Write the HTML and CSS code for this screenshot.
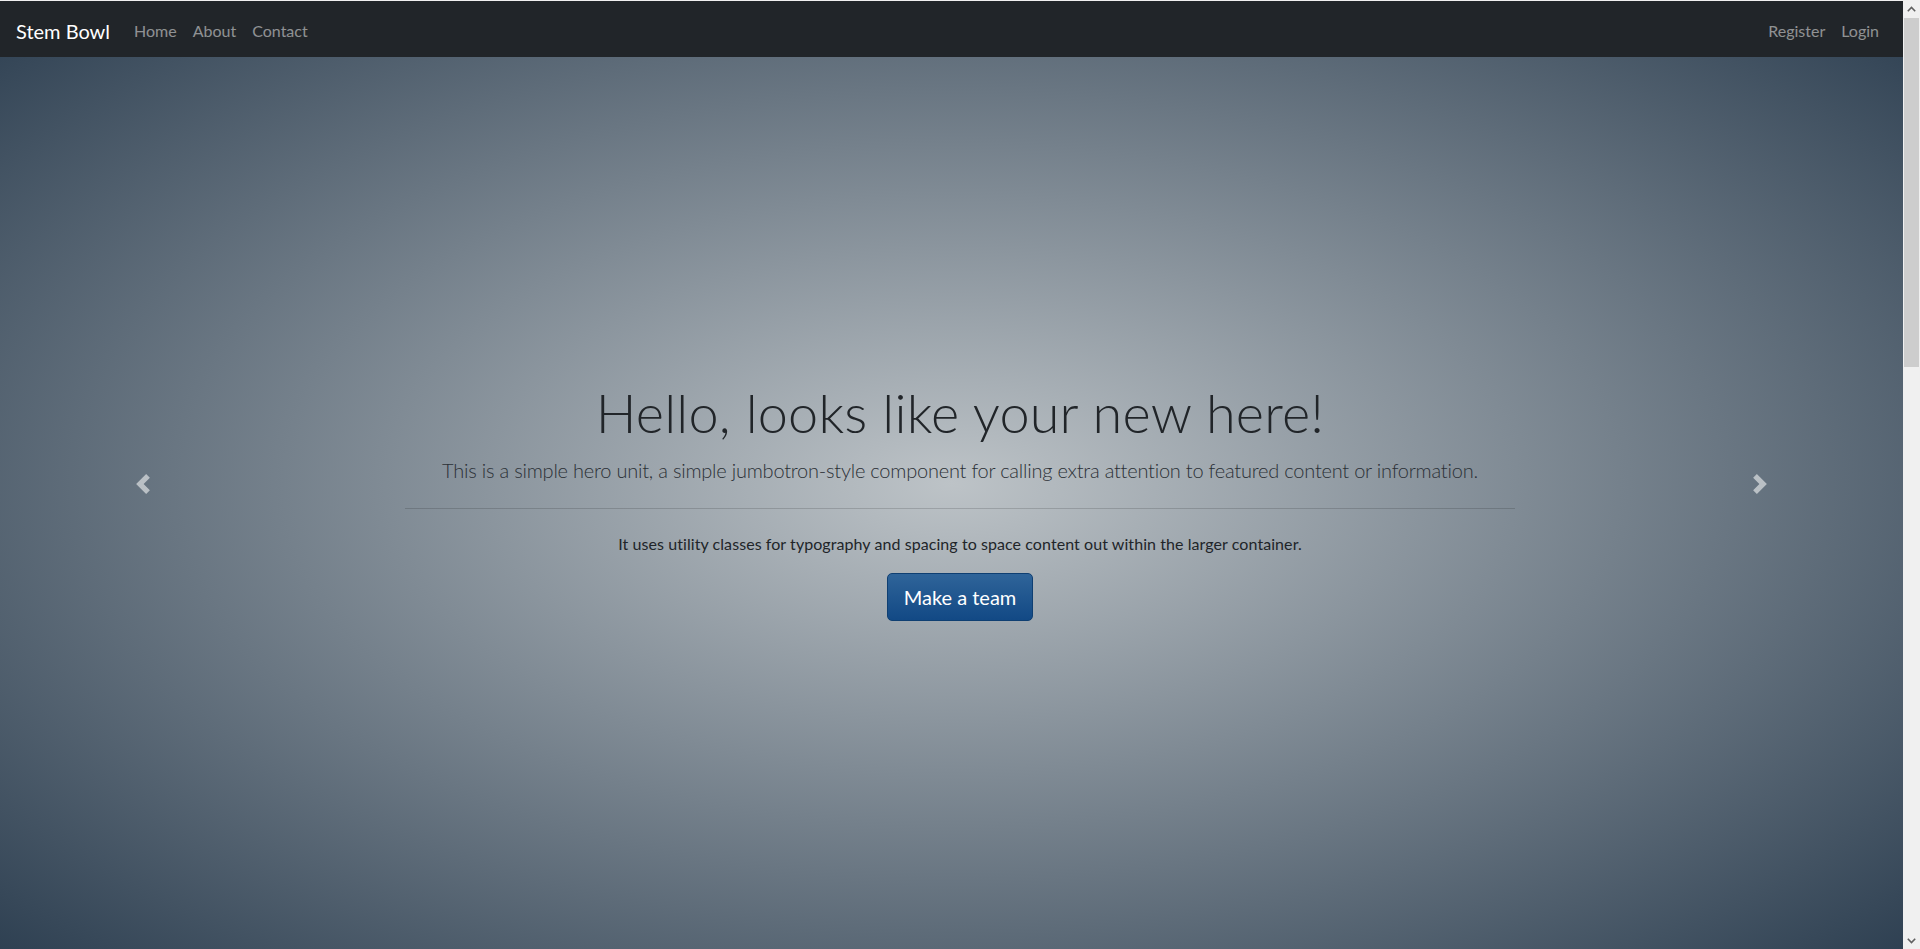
FILE: index.html
```html
<!DOCTYPE html>
<html lang="en">
<head>
<meta charset="utf-8">
<title>Stem Bowl</title>
<link rel="stylesheet" href="styles.css">
</head>
<body>
<div class="page">
  <nav class="navbar">
    <a class="brand" href="#">Stem Bowl</a>
    <ul class="nav">
      <li><a class="nav-link" href="#">Home</a></li>
      <li><a class="nav-link" href="#">About</a></li>
      <li><a class="nav-link" href="#">Contact</a></li>
    </ul>
    <ul class="nav nav-right">
      <li><a class="nav-link" href="#">Register</a></li>
      <li><a class="nav-link" href="#">Login</a></li>
    </ul>
  </nav>

  <section class="hero">
    <div class="hero-inner">
      <div class="jumbo">
        <h1 class="display">Hello, looks like your new here!</h1>
        <p class="lead">This is a simple hero unit, a simple jumbotron-style component for calling extra attention to featured content or information.</p>
        <hr class="divider">
        <p class="note">It uses utility classes for typography and spacing to space content out within the larger container.</p>
        <a class="btn" href="#">Make a team</a>
      </div>
    </div>
    <a class="control control-prev" href="#" aria-label="Previous">
      <svg class="control-icon" viewBox="0 0 8 8" width="20" height="20"><path d="M5.25 0l-4 4 4 4 1.5-1.5L4.25 4l2.5-2.5L5.25 0z" fill="#fff"/></svg>
    </a>
    <a class="control control-next" href="#" aria-label="Next">
      <svg class="control-icon" viewBox="0 0 8 8" width="20" height="20"><path d="M2.75 0l-1.5 1.5L3.75 4l-2.5 2.5L2.75 8l4-4-4-4z" fill="#fff"/></svg>
    </a>
  </section>
</div>

<div class="scrollbar" aria-hidden="true">
  <div class="sb-button">
    <svg viewBox="0 0 9 6" width="9" height="6"><path d="M0.8 5.2L4.5 1.5 8.2 5.2" fill="none" stroke="#606060" stroke-width="1.6"/></svg>
  </div>
  <div class="sb-track">
    <div class="sb-thumb"></div>
  </div>
  <div class="sb-button">
    <svg viewBox="0 0 9 6" width="9" height="6"><path d="M0.8 0.8L4.5 4.5 8.2 0.8" fill="none" stroke="#606060" stroke-width="1.6"/></svg>
  </div>
</div>
</body>
</html>
```
FILE: styles.css
```css
html, body {
  margin: 0;
  padding: 0;
  height: 100%;
}

body {
  display: flex;
  overflow: hidden;
  font-family: "Lato", "Open Sans", sans-serif;
  font-size: 16px;
  line-height: 1.5;
  color: #212529;
  background: #fff;
}

.page {
  position: relative;
  flex: 1;
  min-width: 0;
  height: 100%;
  overflow: hidden;
}

/* Fake window scrollbar */
.scrollbar {
  width: 17px;
  flex: none;
  display: flex;
  flex-direction: column;
  background: #f0f0f0;
}

.sb-button {
  height: 17px;
  flex: none;
  display: flex;
  align-items: center;
  justify-content: center;
}

.sb-button svg {
  display: block;
}

.sb-track {
  flex: 1;
  padding: 1px 1px 0;
}

.sb-thumb {
  height: 349px;
  background: #cdcdcd;
}

/* Navbar */
.navbar {
  position: absolute;
  top: 0;
  left: 0;
  right: 0;
  z-index: 10;
  box-sizing: border-box;
  display: flex;
  align-items: center;
  height: 57px;
  padding: 3px 16px 0;
  background: #212529;
  border-top: 1px solid #f0f0f0;
}

.brand {
  font-size: 20px;
  line-height: 30px;
  color: #fff;
  text-decoration: none;
  margin-right: 16px;
  padding: 5px 0;
}

.nav {
  display: flex;
  list-style: none;
  margin: 0;
  padding: 0;
}

.nav-right {
  margin-left: auto;
}

.nav-link {
  display: block;
  padding: 8px;
  color: rgba(255, 255, 255, 0.5);
  text-decoration: none;
  font-size: 16px;
  line-height: 24px;
}

/* Hero */
.hero {
  position: relative;
  height: 967px;
  overflow: hidden;
  background: radial-gradient(ellipse farthest-corner at center, #bdc3c7 0%, #2c3e50 100%);
}

.hero-inner {
  width: 100vw;
  height: 100%;
  display: flex;
  align-items: flex-start;
  justify-content: center;
}

.jumbo {
  width: 1110px;
  margin-top: 381px;
  text-align: center;
}

.display {
  font-size: 54px;
  font-weight: 300;
  line-height: 1.2;
  letter-spacing: 0.2px;
  margin: 0 0 9px;
}

.lead {
  font-size: 20px;
  font-weight: 300;
  line-height: 30px;
  letter-spacing: -0.22px;
  margin: 0;
  color: #2b3036;
}

.divider {
  border: 0;
  border-top: 1px solid rgba(0, 0, 0, 0.15);
  margin: 23px 0 23px;
}

.note {
  margin: 0 0 17px;
  font-size: 16px;
  line-height: 24px;
  letter-spacing: 0.07px;
}

.btn {
  display: inline-block;
  font-size: 20px;
  line-height: 30px;
  padding: 8px 16px;
  color: #fff;
  text-decoration: none;
  background: linear-gradient(#2f6499, #124985);
  border: 1px solid #0f3f72;
  border-radius: 5px;
}

.control {
  position: absolute;
  top: 0;
  bottom: 0;
  width: 15%;
  display: flex;
  align-items: center;
  justify-content: center;
  opacity: 0.55;
}

.control-prev {
  left: 0;
}

.control-next {
  right: 0;
}

.control-icon {
  display: block;
}
```
